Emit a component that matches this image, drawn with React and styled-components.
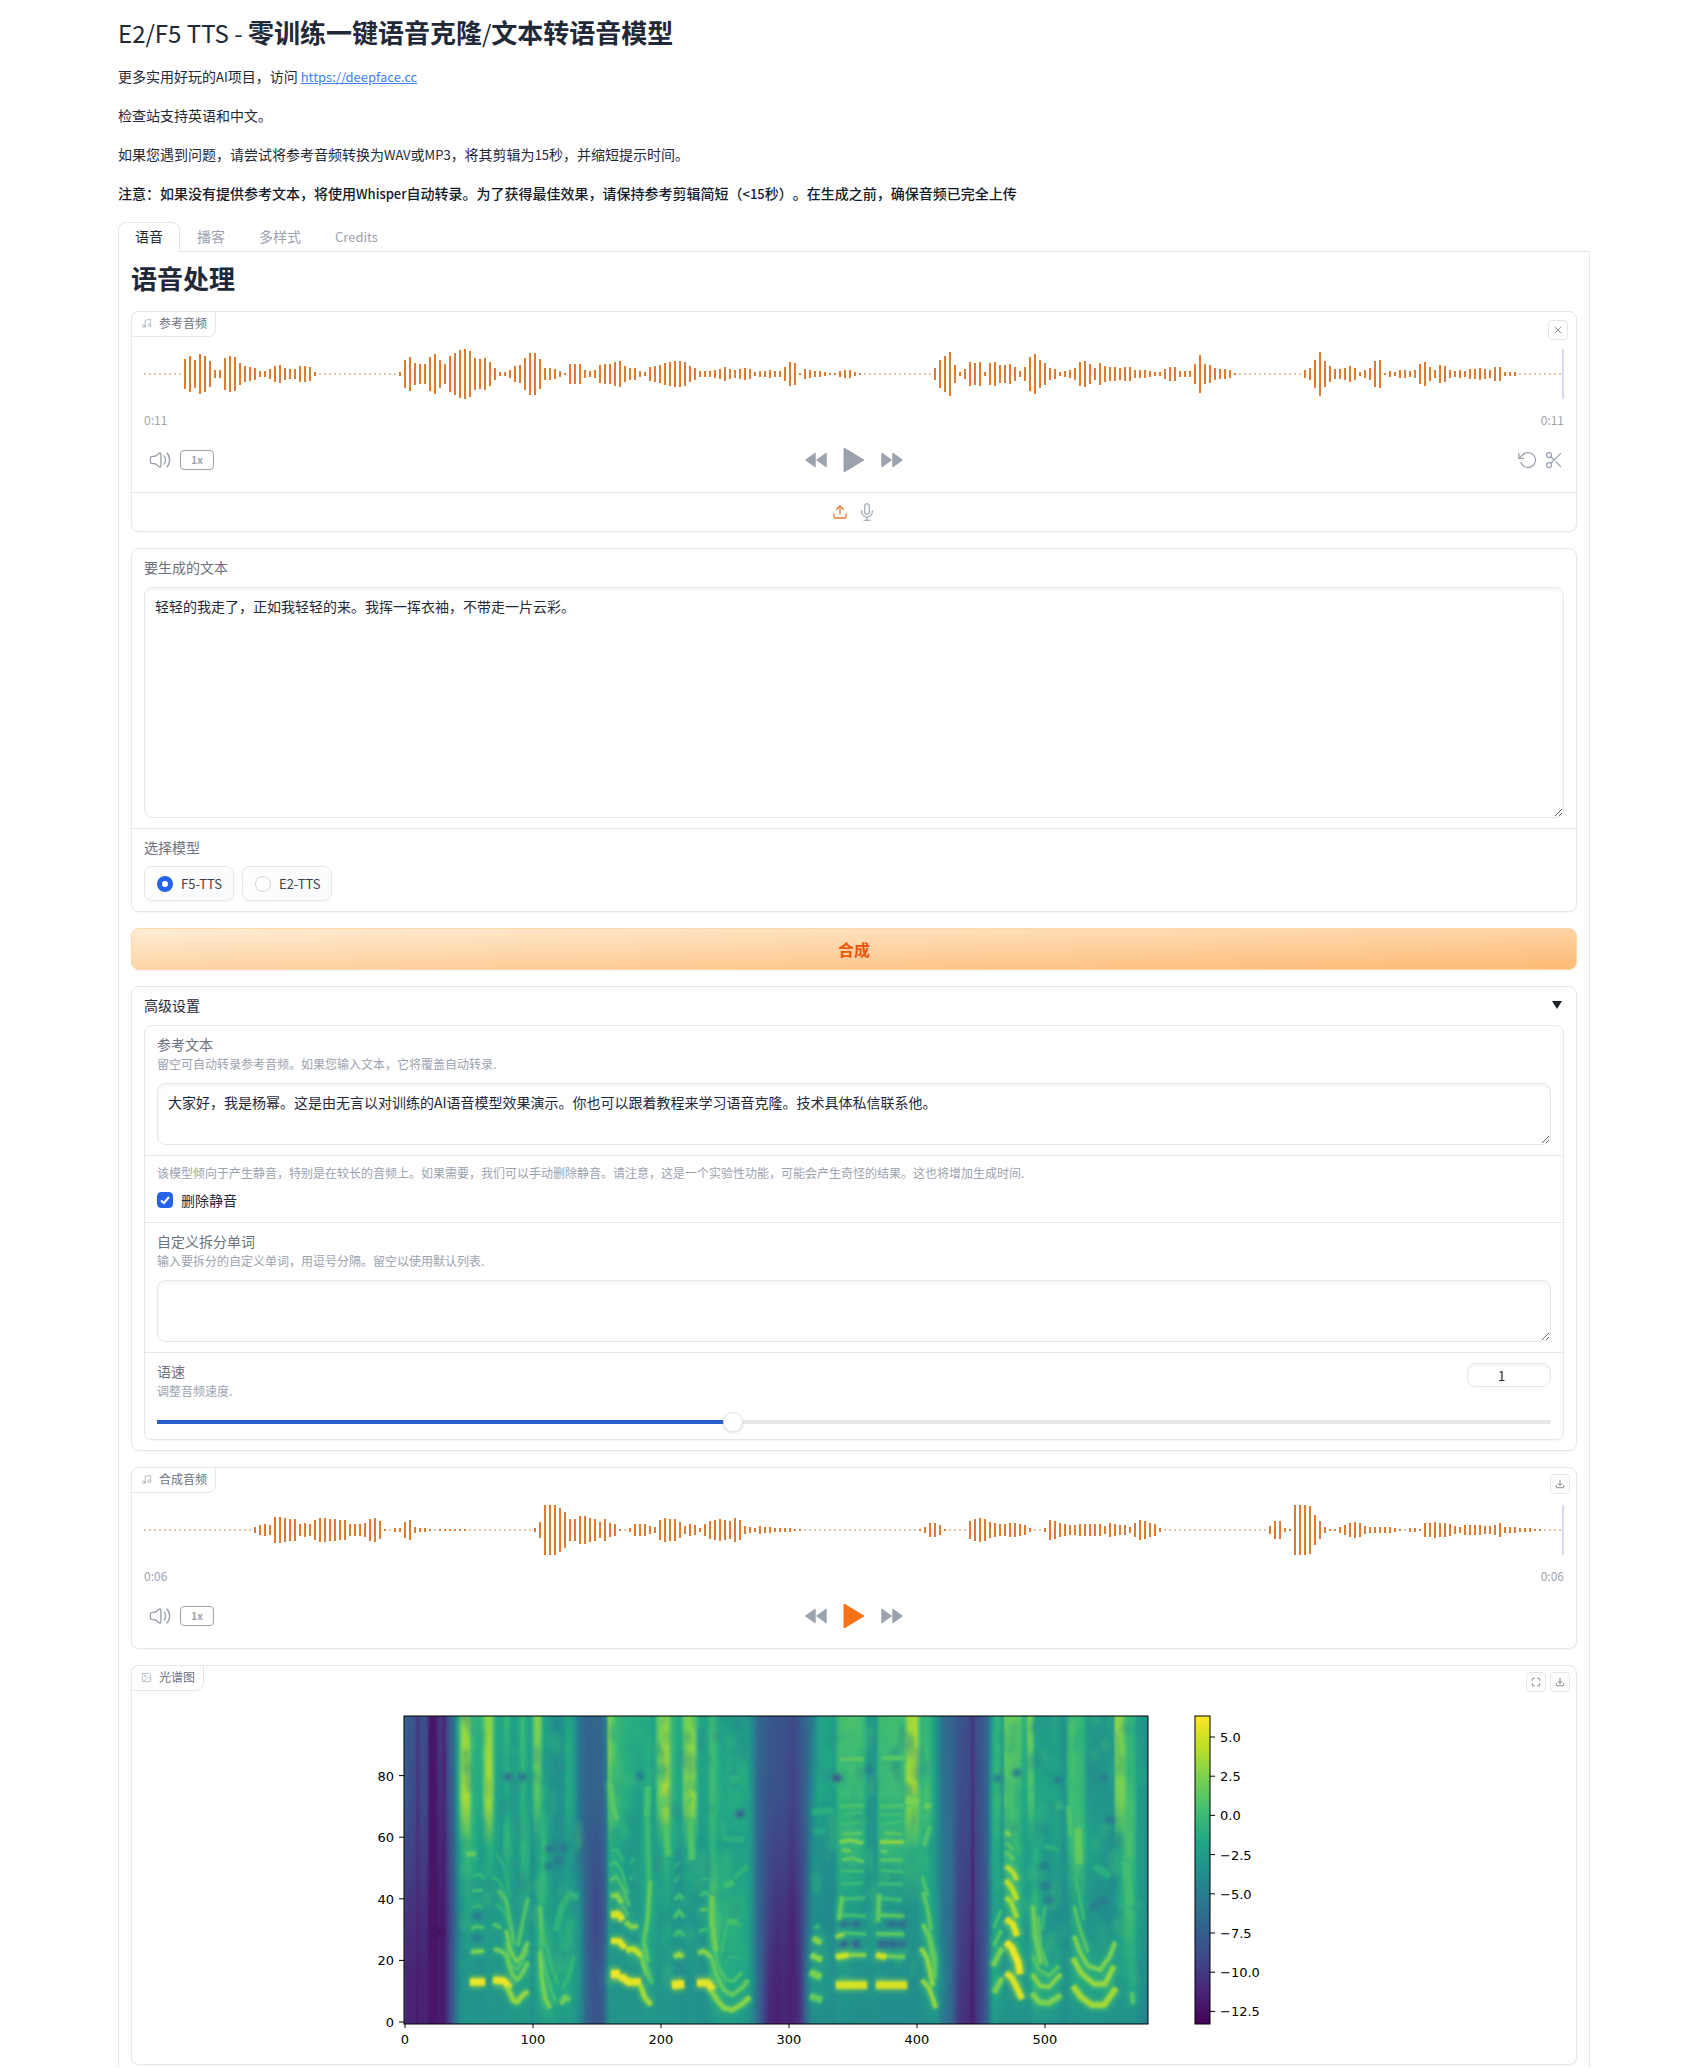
import React, { useState } from 'react'
import styled, { createGlobalStyle, css } from 'styled-components'
import {
	FiDownload,
	FiImage,
	FiMaximize,
	FiMic,
	FiMusic,
	FiRotateCcw,
	FiScissors,
	FiUpload,
	FiX,
} from 'react-icons/fi'

const GlobalStyle = createGlobalStyle`
	* {
		box-sizing: border-box;
	}
	body {
		margin: 0;
		background: #fff;
		color: #1f2937;
		font-family: 'Noto Sans CJK SC', 'Open Sans', sans-serif;
		font-size: 14px;
		line-height: 20px;
		text-spacing-trim: space-all;
	}
	h1, h2, p {
		margin: 0;
	}
	button, input, textarea {
		font-family: inherit;
		color: inherit;
	}
`

const Page = styled.main`
	max-width: 1536px;
	margin: 0 auto;
	padding: 16px 31px 0 33px;
`
const Title = styled.h1`
	font-size: 26px;
	line-height: 32px;
	font-weight: 700;
	margin-bottom: 18px;
`
const TitleLatin = styled.span`
	font-size: 24px;
	font-weight: 400;
`
const Latin = styled.span`
	font-size: 13px;
`
const Prose = styled.div`
	display: flex;
	flex-direction: column;
	gap: 20px;
	line-height: 19px;

	a {
		color: #3b82f6;
	}
`
const Note = styled.p`
	font-weight: 500;
	color: #111827;
`

const TabBar = styled.div`
	display: flex;
	height: 30px;
	margin-top: 19px;
	border-bottom: 1px solid #e5e7eb;
`
const Tab = styled.button`
	height: 30px;
	padding: 0 16px 3px;
	font-size: 14px;
	line-height: 26px;
	cursor: pointer;
	color: ${(props) => (props.$active ? '#1f2937' : '#9ca3af')};
	background: ${(props) => (props.$active ? '#fff' : 'transparent')};
	border: 1px solid ${(props) => (props.$active ? '#e5e7eb' : 'transparent')};
	border-bottom: none;
	border-radius: 8px 8px 0 0;
`
const Panel = styled.section`
	display: flex;
	flex-direction: column;
	gap: 16px;
	padding: 12px 12px 2px;
	border: 1px solid #e5e7eb;
	border-top: none;
	border-bottom: none;
`
const PanelTitle = styled.h2`
	font-size: 26px;
	line-height: 28px;
	font-weight: 700;
	margin-bottom: 3px;
`

const Block = styled.div`
	position: relative;
	border: 1px solid #e5e7eb;
	border-radius: 8px;
	background: #fff;
	box-shadow: 0 1px 2px rgba(0, 0, 0, 0.04);
`
const BlockLabel = styled.div`
	position: absolute;
	top: -1px;
	left: -1px;
	display: flex;
	align-items: center;
	gap: 7px;
	height: 26px;
	padding: 0 8px 2px 9px;
	font-size: 12px;
	color: #6b7280;
	border: 1px solid #e5e7eb;
	border-radius: 8px 0 8px 0;
	background: #fff;

	svg {
		width: 11px;
		height: 11px;
		stroke-width: 1.5;
		color: #9ca3af;
	}
`
const CornerTools = styled.div`
	position: absolute;
	top: ${(props) => (props.$tight ? '6px' : '8px')};
	right: ${(props) => (props.$tight ? '6px' : '8px')};
	display: flex;
	gap: 4px;
`
const CornerButton = styled.button`
	display: flex;
	align-items: center;
	justify-content: center;
	width: 20px;
	height: 20px;
	padding: 0;
	border: 1px solid #e5e7eb;
	border-radius: 4px;
	background: #fff;
	color: #6b7280;
	cursor: pointer;
`

const Player = styled.div`
	padding: 37px 12px 19px;
`
const WaveSvg = styled.svg`
	display: block;
	width: 100%;
	height: 50px;
`
const Times = styled.div`
	display: flex;
	justify-content: space-between;
	margin-top: 10px;
	font-size: 12px;
	line-height: 21px;
	color: #9ca3af;
`
const Controls = styled.div`
	display: grid;
	grid-template-columns: 1fr auto 1fr;
	align-items: center;
	height: 26px;
	margin-top: 17px;
	color: #9ca3af;
`
const ControlGroup = styled.div`
	display: flex;
	align-items: center;
	gap: ${(props) => props.$gap || 9}px;
	justify-content: ${(props) => props.$align || 'flex-start'};
	padding-left: ${(props) => (props.$align ? 0 : 5)}px;
`
const IconButton = styled.button`
	display: flex;
	padding: 0;
	border: none;
	background: none;
	cursor: pointer;
	color: ${(props) => props.$color || 'inherit'};
`
const SpeedButton = styled.button`
	width: 34px;
	height: 20px;
	padding: 0;
	border: 1px solid #9ca3af;
	border-radius: 4px;
	background: none;
	font-size: 10px;
	line-height: 18px;
	font-weight: 700;
	color: #9ca3af;
	cursor: pointer;
`
const Sources = styled.div`
	display: flex;
	align-items: center;
	justify-content: center;
	gap: 10px;
	height: 39px;
	border-top: 1px solid #e5e7eb;
	color: #9ca3af;
`

const Field = styled.div`
	padding: 8px 12px 10px;

	& + & {
		border-top: 1px solid #e5e7eb;
	}
`
const fieldTitle = css`
	display: block;
	padding: 0;
	font-size: 14px;
	line-height: 20px;
	color: #6b7280;
`
const FieldLabel = styled.label`
	${fieldTitle}
`
const FieldLegend = styled.legend`
	${fieldTitle}
`
const Info = styled.p`
	margin-top: ${(props) => (props.$first ? 0 : 1)}px;
	font-size: 12px;
	line-height: 18px;
	color: #9ca3af;
`
const TextArea = styled.textarea`
	display: block;
	width: 100%;
	height: ${(props) => (props.$tall ? 231 : 62)}px;
	margin-top: 10px;
	padding: 8px 10px;
	border: 1px solid #e5e7eb;
	border-radius: 8px;
	box-shadow: inset 0 2px 4px rgba(0, 0, 0, 0.05);
	background: #fff;
	font-size: 14px;
	line-height: 20px;
	resize: vertical;
`
const RadioSet = styled.fieldset`
	margin: 0;
	padding: 0;
	border: none;
`
const RadioRow = styled.div`
	display: flex;
	gap: 8px;
	margin-top: 9px;
`
const RadioCard = styled.label`
	display: flex;
	align-items: center;
	gap: 8px;
	height: 35px;
	padding: 0 11px 0 12px;
	border: 1px solid #e5e7eb;
	border-radius: 8px;
	background: linear-gradient(to bottom right, #fff, #f9fafb);
	box-shadow: 0 1px 2px rgba(0, 0, 0, 0.05);
	font-size: 13px;
	color: #374151;
	cursor: pointer;
`
const Radio = styled.input`
	appearance: none;
	width: 16px;
	height: 16px;
	margin: 0;
	border: 1px solid #d1d5db;
	border-radius: 50%;
	background: #fff;

	&:checked {
		border: 5px solid #2563eb;
	}
`
const SubmitButton = styled.button`
	height: 42px;
	border: 1px solid #fed7aa;
	border-radius: 8px;
	background: linear-gradient(to bottom right, #ffedd5, #fdba74);
	box-shadow: 0 1px 2px rgba(0, 0, 0, 0.05);
	font-size: 16px;
	font-weight: 600;
	color: #ea580c;
	cursor: pointer;
`

const Accordion = styled(Block)`
	padding: 8px 12px 10px;
`
const AccordionHeader = styled.button`
	display: flex;
	justify-content: space-between;
	align-items: center;
	width: 100%;
	margin-bottom: 10px;
	padding: 0;
	border: none;
	background: none;
	font-size: 14px;
	line-height: 20px;
	cursor: pointer;
`
const Arrow = styled.svg`
	width: 14px;
	height: 10px;
`
const CheckField = styled(Field)`
	padding-bottom: 12px;
`
const CheckRow = styled.label`
	display: flex;
	align-items: center;
	gap: 8px;
	margin-top: 8px;
	cursor: pointer;
`
const Checkbox = styled.input`
	appearance: none;
	width: 16px;
	height: 16px;
	margin: 0;
	border: 1px solid #d1d5db;
	border-radius: 4px;

	&:checked {
		border-color: #2563eb;
		background: #2563eb
			url("data:image/svg+xml,%3Csvg viewBox='0 0 16 16' fill='none' stroke='white' stroke-width='2' xmlns='http://www.w3.org/2000/svg'%3E%3Cpath d='M4 8.5l3 2.5 5-6'/%3E%3C/svg%3E")
			center / 16px;
	}
`
const SliderField = styled(Field)`
	padding-bottom: 5px;
`
const SliderHead = styled.div`
	display: flex;
	justify-content: space-between;
	align-items: flex-start;
`
const NumberInput = styled.input`
	width: 84px;
	height: 24px;
	margin-top: 2px;
	padding: 0 8px;
	border: 1px solid #e5e7eb;
	border-radius: 8px;
	box-shadow: inset 0 2px 4px rgba(0, 0, 0, 0.05);
	font-size: 13px;
	text-align: center;
`
const Range = styled.input`
	appearance: none;
	display: block;
	width: 100%;
	height: 24px;
	margin: 10px 0 0;
	background: linear-gradient(
			to right,
			#2c5fc9 var(--fill),
			#e5e7eb var(--fill)
		)
		center / 100% 4px no-repeat;

	&::-webkit-slider-thumb {
		appearance: none;
		width: 20px;
		height: 20px;
		border: 1px solid #e5e7eb;
		border-radius: 50%;
		background: #fff;
		box-shadow: 0 1px 3px rgba(0, 0, 0, 0.15);
	}
`
const Plot = styled.svg`
	display: block;
	width: 100%;
	max-width: 960px;
	margin: 0 auto;
	font-family: 'DejaVu Sans', sans-serif;
	font-size: 13px;
`
const PlotArea = styled.div`
	padding: 23px 12px 3px;
`

/* ---------- wave forms ---------- */

// bar heights in px, "h*n" repeats a height n times
const expand = (text) =>
	text
		.trim()
		.split(/\s+/)
		.flatMap((part) => {
			const [h, n] = part.split('*').map(Number)
			return Array(n || 1).fill(h)
		})

const REFERENCE_WAVE = expand(`
	1*8 30 36 28 40 36 26 8 8 32 36 34 22 16 14 12 6 6 10 16 18 12 10 10 16 16 14 4
	1*16 4 28 34 22 20 20 34 40 28 20 36 42 48 50 46 32 30 32 24 12 4 4 8 16 18 32
	42 42 30 12 12 10 6 2 20 20 20 8 6 8 18 20 20 24 26 16 12 12 6 4 14 16 18 22 24
	26 26 24 16 12 6 6 6 8 10 14 10 8 10 12 10 4 6 6 8 6 6 14 24 22 2 10 8 6 6 4 2 2
	6 8 8 4 2 1*14 12 28 36 44 18 4 10 24 22 24 4 22 24 18 18 20 14 6 14 34 40 28 22
	12 10 4 6 8 12 24 26 20 12 22 16 14 14 12 14 14 8 8 8 6 4 4 10 14 14 6 6 6 20 38
	20 18 12 10 10 8 2 1*13 8 12 28 44 26 16 10 10 12 16 12 4 8 12 26 28 2 6 4 8 8 6
	8 20 24 14 8 18 16 8 6 8 6 10 10 12 10 8 14 14 4 4 4 1*9
`)

const RESULT_WAVE = expand(`
	1*22 6 10 12 10 26 26 24 22 22 12 14 12 20 24 24 22 22 20 20 12 12 12 14 22 24 18
	2 1 4 4 16 20 6 4 4 2 1 2*6 1*13 4 16 50 50 50 44 36 22 22 28 28 24 22 16 22 14 12
	2 1 4 12 12 12 8 6 20 24 22 22 16 8 12 10 4 12 18 20 22 20 18 24 20 8 6 4 8 6 6 4
	4 4 4 2 2 1*23 2 6 14 14 10 2 1*4 18 22 24 22 16 14 12 12 14 14 12 10 4 1 1 4 20 18
	14 12 10 10 12*5 8 14 12 10 10 6 14 20 18 14 12 4 1*21 8 18 18 4 2 50 50 50 48 30
	18 6 2 2 6 10 14 16 14 8 6 6 6 6 6 4 2 1 4 4 2 14 14 16 14 14 12 8 6 10 10 10 10 8
	8 10 14 6 6 6 4 4 4 2 2 1*4
`)

const Wave = ({ bars }) => (
	<WaveSvg viewBox="0 0 1420 50" preserveAspectRatio="none">
		{bars.map((h, i) => (
			<rect
				key={i}
				x={i * 5}
				y={25 - h / 2}
				width="2"
				height={h}
				fill={h > 1 ? '#e07a2f' : '#c98a50'}
			/>
		))}
		<rect x="1418" y="0" width="2" height="50" fill="#dcd8f0" />
	</WaveSvg>
)

/* ---------- icons ---------- */

const VolumeIcon = () => (
	<svg width="22" height="22" viewBox="0 0 24 24" fill="none" stroke="currentColor" strokeWidth="1.5" strokeLinecap="round" strokeLinejoin="round">
		<path d="M1.5 13.9v-3.8a2 2 0 0 1 2-2h2.4a1 1 0 0 0 .6-.1l5-3.6a1 1 0 0 1 1.5.8v13.6a1 1 0 0 1-1.5.8l-5-3.6a1 1 0 0 0-.6-.1H3.5a2 2 0 0 1-2-2z" />
		<path d="M16.5 7.5s1.5 1.5 1.5 4.5-1.5 4.5-1.5 4.5" />
		<path d="M19.5 4.5s3 2.5 3 7.5-3 7.5-3 7.5" />
	</svg>
)
const RewindIcon = () => (
	<svg width="22" height="16" viewBox="0 0 22 16" fill="currentColor" stroke="currentColor" strokeWidth="1.5" strokeLinejoin="round">
		<path d="M10 1.5v13L1 8z" />
		<path d="M21 1.5v13L12 8z" />
	</svg>
)
const ForwardIcon = () => (
	<svg width="22" height="16" viewBox="0 0 22 16" fill="currentColor" stroke="currentColor" strokeWidth="1.5" strokeLinejoin="round">
		<path d="M1 1.5v13L10 8z" />
		<path d="M12 1.5v13L21 8z" />
	</svg>
)
const PlayIcon = () => (
	<svg width="22" height="26" viewBox="0 0 22 26" fill="currentColor" stroke="currentColor" strokeLinejoin="round">
		<path d="M1 1v24l20-12z" />
	</svg>
)

const AudioPlayer = ({ bars, time, playColor, children }) => (
	<Player>
		<Wave bars={bars} />
		<Times>
			<time>{time}</time>
			<time>{time}</time>
		</Times>
		<Controls>
			<ControlGroup>
				<IconButton aria-label="volume">
					<VolumeIcon />
				</IconButton>
				<SpeedButton>1x</SpeedButton>
			</ControlGroup>
			<ControlGroup $align="center" $gap={16}>
				<IconButton aria-label="rewind">
					<RewindIcon />
				</IconButton>
				<IconButton aria-label="play" $color={playColor}>
					<PlayIcon />
				</IconButton>
				<IconButton aria-label="forward">
					<ForwardIcon />
				</IconButton>
			</ControlGroup>
			<ControlGroup $align="flex-end" $gap={6}>
				{children}
			</ControlGroup>
		</Controls>
	</Player>
)

/* ---------- spectrogram ---------- */

const VIRIDIS = [
	[68, 1, 84],
	[72, 36, 117],
	[65, 68, 135],
	[53, 95, 141],
	[42, 120, 142],
	[33, 145, 140],
	[34, 168, 132],
	[68, 191, 112],
	[122, 209, 81],
	[189, 223, 38],
	[253, 231, 37],
]
const viridis = (v) => {
	const t = Math.min(0.999, Math.max(0, v)) * 10
	const i = Math.floor(t)
	const mix = VIRIDIS[i].map((c, k) =>
		Math.round(c + (VIRIDIS[i + 1][k] - c) * (t - i))
	)
	return `rgb(${mix.join(',')})`
}

const PLOT_W = 744
const PLOT_H = 308
const COL = 3
const LEVELS = [0, 0.27, 0.43, 0.65, 0.85, 1]

// x, then the level at each of LEVELS from the top down
const COLUMNS = [
	[0, 30, 28, 22, 15, 10, 10],
	[7, 27, 23, 20, 14, 10, 10],
	[9, 30, 26, 22, 16, 11, 10],
	[13, 15, 13, 13, 10, 8, 8],
	[17, 27, 24, 20, 14, 10, 10],
	[22, 22, 20, 18, 12, 10, 9],
	[25, 7, 6, 6, 5, 6, 6],
	[32, 7, 5, 5, 5, 5, 6],
	[35, 20, 16, 12, 8, 8, 8],
	[40, 10, 10, 8, 7, 7, 7],
	[44, 28, 25, 22, 18, 18, 18],
	[50, 38, 34, 32, 30, 33, 34],
	[54, 58, 58, 48, 42, 42, 42],
	[58, 78, 80, 58, 46, 46, 47],
	[63, 82, 86, 64, 52, 48, 48],
	[68, 62, 60, 60, 52, 48, 48],
	[77, 60, 55, 50, 48, 46, 47],
	[81, 76, 80, 54, 50, 48, 47],
	[86, 80, 86, 60, 52, 50, 48],
	[91, 58, 55, 54, 50, 48, 48],
	[97, 55, 50, 50, 50, 48, 48],
	[102, 64, 58, 66, 52, 50, 48],
	[108, 52, 48, 52, 50, 52, 48],
	[113, 54, 50, 48, 48, 52, 48],
	[118, 64, 62, 62, 48, 52, 48],
	[124, 54, 52, 58, 52, 52, 48],
	[128, 56, 54, 42, 44, 46, 46],
	[131, 80, 72, 48, 52, 52, 48],
	[135, 78, 68, 54, 62, 60, 48],
	[139, 54, 54, 64, 58, 66, 50],
	[145, 50, 48, 52, 52, 64, 52],
	[151, 44, 46, 44, 50, 58, 50],
	[158, 46, 46, 44, 54, 56, 48],
	[164, 58, 60, 50, 54, 58, 50],
	[170, 48, 50, 44, 50, 52, 48],
	[175, 38, 38, 38, 46, 46, 42],
	[182, 32, 32, 30, 30, 32, 32],
	[190, 33, 31, 26, 22, 25, 26],
	[198, 33, 32, 28, 24, 30, 27],
	[202, 42, 40, 38, 36, 40, 40],
	[205, 78, 72, 55, 50, 48, 46],
	[210, 66, 68, 60, 50, 48, 48],
	[217, 60, 60, 52, 50, 48, 47],
	[226, 58, 56, 48, 50, 48, 47],
	[235, 58, 50, 50, 50, 48, 47],
	[243, 58, 60, 62, 54, 52, 48],
	[250, 54, 52, 52, 54, 50, 48],
	[254, 74, 72, 52, 50, 48, 48],
	[262, 80, 87, 60, 52, 48, 48],
	[268, 62, 62, 56, 50, 48, 48],
	[276, 55, 52, 46, 46, 46, 46],
	[281, 76, 78, 54, 48, 46, 46],
	[290, 77, 82, 60, 48, 48, 48],
	[294, 54, 54, 50, 48, 46, 46],
	[302, 54, 54, 50, 50, 46, 46],
	[308, 67, 66, 62, 72, 56, 48],
	[314, 56, 58, 54, 64, 62, 50],
	[320, 50, 56, 54, 60, 58, 50],
	[330, 50, 58, 52, 60, 56, 50],
	[342, 50, 56, 52, 56, 54, 48],
	[347, 44, 48, 48, 46, 48, 44],
	[353, 34, 33, 34, 34, 36, 34],
	[364, 28, 26, 23, 20, 14, 11],
	[372, 26, 25, 20, 14, 10, 9],
	[380, 26, 24, 21, 15, 12, 11],
	[388, 22, 19, 16, 10, 9, 9],
	[396, 28, 26, 23, 18, 15, 14],
	[402, 33, 33, 30, 32, 38, 34],
	[408, 40, 44, 44, 44, 50, 44],
	[415, 54, 56, 46, 44, 50, 44],
	[424, 56, 54, 44, 42, 48, 44],
	[430, 54, 50, 44, 44, 46, 44],
	[434, 66, 62, 60, 54, 50, 45],
	[447, 68, 64, 62, 50, 48, 45],
	[459, 65, 62, 58, 46, 46, 44],
	[463, 50, 48, 48, 48, 48, 44],
	[471, 48, 46, 46, 52, 50, 44],
	[475, 64, 62, 60, 46, 46, 44],
	[489, 66, 64, 62, 46, 46, 44],
	[500, 66, 64, 60, 46, 46, 44],
	[503, 82, 82, 62, 46, 46, 44],
	[512, 83, 85, 62, 46, 44, 44],
	[516, 60, 62, 60, 50, 48, 44],
	[522, 62, 68, 60, 54, 52, 44],
	[528, 56, 58, 52, 52, 56, 46],
	[532, 46, 48, 46, 48, 52, 46],
	[538, 36, 38, 40, 40, 42, 40],
	[547, 32, 34, 35, 34, 34, 33],
	[554, 26, 24, 22, 20, 18, 16],
	[565, 23, 22, 20, 17, 14, 12],
	[568, 14, 12, 10, 9, 8, 7],
	[571, 24, 22, 20, 18, 15, 14],
	[578, 28, 27, 26, 24, 22, 22],
	[584, 34, 34, 33, 32, 34, 34],
	[588, 54, 58, 56, 50, 56, 48],
	[594, 64, 66, 56, 54, 56, 48],
	[598, 50, 48, 46, 50, 52, 46],
	[601, 72, 68, 62, 54, 50, 46],
	[608, 72, 66, 66, 56, 50, 46],
	[615, 72, 62, 60, 58, 54, 46],
	[621, 54, 52, 50, 50, 50, 46],
	[624, 78, 66, 52, 50, 50, 46],
	[627, 76, 70, 54, 58, 56, 46],
	[631, 52, 56, 60, 62, 62, 48],
	[642, 50, 54, 48, 46, 56, 48],
	[654, 50, 54, 54, 46, 54, 46],
	[660, 44, 44, 42, 42, 46, 44],
	[665, 68, 66, 62, 46, 50, 46],
	[672, 64, 64, 68, 54, 56, 46],
	[679, 60, 60, 64, 50, 56, 46],
	[683, 50, 48, 54, 46, 56, 46],
	[702, 48, 48, 48, 44, 56, 46],
	[709, 52, 50, 46, 46, 54, 46],
	[712, 80, 74, 52, 48, 50, 46],
	[719, 76, 76, 62, 60, 50, 46],
	[723, 60, 64, 68, 66, 54, 46],
	[729, 58, 66, 64, 62, 56, 46],
	[733, 50, 52, 50, 52, 50, 44],
	[738, 50, 48, 50, 48, 46, 42],
	[744, 45, 45, 44, 46, 44, 40],
]

// voiced parts are lifted a little over the silent ones
const lift = (v) => (v > 41 ? v + 4 : v)

const columnAt = (x) => {
	let i = 0
	while (i < COLUMNS.length - 2 && COLUMNS[i + 1][0] <= x) i++
	const a = COLUMNS[i]
	const b = COLUMNS[i + 1]
	const t = Math.min(1, Math.max(0, (x - a[0]) / (b[0] - a[0])))
	return LEVELS.map((_, k) => {
		const v = lift(a[k + 1]) + (lift(b[k + 1]) - lift(a[k + 1])) * t
		return v / 100
	})
}

// harmonics: level, stroke width, points
const TRACES = [
	[97, 9, '66,266 81,266'], [97, 8, '89,264 100,265 106,272'],
	[84, 6, '103,270 109,284 113,286 118,280 124,275'],
	[80, 5, '67,236 80,235'], [78, 5, '90,233 99,236 105,243'],
	[78, 5, '103,243 108,258 113,264 118,258 124,246'],
	[72, 4, '67,213 73,210 80,212'], [74, 4, '89,208 97,212'],
	[80, 4, '102,214 107,236 113,246 118,240 124,226'],
	[74, 3, '102,226 107,248 113,254 118,246 124,234'],
	[68, 3, '68,192 74,189 79,192'], [70, 4, '68,175 79,174'],
	[68, 3, '69,161 75,158 80,162'], [64, 3, '69,146 74,142'],
	[74, 4, '94,174 102,184 106,205 110,228'],
	[66, 3, '92,188 100,196 105,210'], [64, 3, '92,138 100,150 106,180'],
	[74, 4, '124,182 119,204 114,230'], [66, 3, '88,160 96,166 103,182'],
	[76, 6, '62,138 72,138'], [74, 5, '136,190 138,220 137,240'],
	[80, 5, '136,236 138,262 141,282 146,292'],
	[70, 4, '136,222 141,250 146,272 152,286'],
	[68, 4, '139,214 146,246 154,268'],
	[78, 6, '157,288 161,281 166,284'], [66, 5, '158,274 164,262 170,240'],
	[64, 9, '152,215 158,190 166,178 174,182'],
	[98, 10, '207,258 216,258'], [96, 9, '216,260 225,266 237,266'],
	[86, 6, '236,268 241,282 247,289'],
	[96, 7, '207,225 215,225 221,232'], [90, 7, '222,234 230,233 238,240'],
	[80, 5, '237,240 242,256 247,264'],
	[94, 8, '207,199 214,198 219,204'], [82, 5, '221,206 228,211 234,210'],
	[82, 6, '207,180 213,179 218,187'], [72, 3, '218,187 224,200'],
	[74, 3, '206,165 212,160 219,172 225,190'],
	[70, 3, '206,150 211,145 218,156 224,178'],
	[68, 3, '207,134 213,134 219,146'], [66, 3, '225,164 229,160'],
	[66, 3, '226,148 230,142'], [74, 6, '206,66 209,90 213,104'],
	[70, 8, '244,70 243,100'], [76, 5, '246,165 244,200 240,226 244,246'],
	[68, 6, '243,100 245,165'],
	[72, 4, '240,215 239,236 245,258 248,268'],
	[97, 10, '268,269 280,268'], [84, 6, '270,241 275,238 279,241'],
	[70, 4, '270,220 275,215 280,220'], [72, 4, '270,202 275,195 280,201'],
	[70, 4, '271,184 275,179 279,183'], [66, 3, '270,166 276,160'],
	[64, 3, '270,152 276,146'],
	[96, 9, '293,267 304,267 309,274'], [82, 5, '294,237 300,235 307,241'],
	[70, 4, '295,215 304,213'], [74, 4, '296,194 304,193'],
	[70, 4, '296,180 301,176 306,180'], [66, 3, '297,164 305,162'],
	[82, 6, '307,274 313,284 320,292 328,294 338,288 346,281'],
	[76, 5, '307,240 312,258 320,274 328,279 338,272 344,264'],
	[72, 4, '308,220 314,250 322,264 330,265 338,256'],
	[78, 6, '308,180 308,205 312,235'], [68, 4, '318,236 322,212 328,204 338,210'],
	[66, 3, '320,250 326,240 336,242'], [70, 8, '322,206 334,206'],
	[69, 9, '320,170 330,166'], [64, 7, '330,162 344,150'],
	[62, 9, '318,122 340,124'], [63, 10, '326,64 336,62'],
	[76, 9, '257,84 263,87'], [76, 8, '283,84 287,86'], [72, 8, '262,110 264,140'],
	[72, 8, '286,104 288,144'],
	[76, 8, '406,280 418,284'], [80, 8, '406,256 417,261'],
	[82, 7, '407,239 418,244'], [82, 7, '409,222 417,227'],
	[68, 4, '410,212 416,210'], [62, 9, '408,96 430,94'], [60, 8, '410,116 422,114'],
	[94, 9, '432,269 463,269'], [94, 9, '472,269 503,269'],
	[92, 7, '432,241 444,239'], [82, 5, '444,239 462,239'],
	[92, 7, '472,239 482,241'], [78, 5, '482,240 501,241'],
	[84, 5, '432,221 440,218'], [72, 4, '440,217 462,218'],
	[74, 5, '472,218 500,218'], [82, 4, '434,200 438,198'],
	[70, 4, '437,199 462,200'], [76, 4, '473,199 500,200'],
	[70, 4, '436,183 461,182'], [70, 4, '474,182 498,184'],
	[70, 3, '437,168 458,167'], [70, 3, '475,168 499,168'],
	[70, 3, '437,155 460,155'], [70, 3, '476,154 499,156'],
	[76, 4, '438,144 448,142 460,146'], [76, 3, '476,144 499,144'],
	[80, 3, '438,134 447,135'], [78, 3, '477,135 484,136'],
	[82, 4, '436,126 446,124 459,127'], [84, 4, '476,126 500,126'],
	[76, 3, '438,118 458,117'], [76, 3, '480,117 498,118'],
	[70, 3, '438,108 456,106'], [70, 3, '478,108 496,106'],
	[70, 3, '440,98 458,96'], [70, 3, '476,98 498,99'],
	[70, 7, '436,90 460,90'], [70, 7, '476,90 500,90'],
	[74, 6, '436,43 460,43'], [74, 6, '478,42 502,42'],
	[76, 5, '438,180 435,204'], [76, 5, '475,178 474,206'],
	[80, 10, '502,84 514,86'], [76, 8, '521,88 526,92'],
	[72, 6, '526,110 520,130'], [84, 5, '518,264 525,272 532,292'],
	[84, 5, '517,232 523,242 529,270'], [78, 5, '519,208 525,222 531,250'],
	[76, 4, '519,176 523,190 527,214'], [72, 4, '518,160 524,180'],
	[76, 6, '524,215 530,240 530,262'],
	[80, 6, '590,277 598,262'], [80, 6, '589,250 598,232'],
	[74, 4, '590,230 597,214'], [70, 4, '590,212 597,194'],
	[94, 7, '602,257 608,262 613,272 618,283'],
	[97, 8, '602,226 608,232 614,246 616,258'],
	[95, 7, '602,203 609,208 613,220'],
	[86, 6, '602,181 607,186 613,202'], [90, 6, '602,164 608,172 613,184'],
	[90, 5, '602,150 609,156 613,164'], [76, 4, '602,136 610,144'],
	[80, 5, '602,115 606,120'], [74, 4, '602,126 609,134'],
	[80, 7, '628,277 635,286 645,287 657,279'],
	[82, 5, '628,258 636,270 645,271 657,258'],
	[74, 4, '629,240 635,254 645,260 655,250'],
	[78, 5, '629,190 631,220 637,248'], [74, 4, '634,200 636,230 643,250'],
	[70, 3, '641,190 638,214'],
	[86, 7, '669,270 677,281 688,289 700,289 712,272'],
	[84, 6, '669,242 677,257 690,268 701,268 710,250'],
	[80, 5, '670,220 676,236 684,250 696,254 706,240 711,226'],
	[74, 4, '670,190 675,210 684,236'], [70, 3, '671,160 676,184 680,204'],
	[76, 9, '674,112 675,148'], [62, 10, '690,150 706,160'],
	[62, 7, '640,130 655,134'], [74, 5, '728,276 729,288'],
	[69, 11, '722,145 726,190'], [72, 6, '665,90 667,120'],
]

const SPOTS = [
	[104, 61, 36], [118, 61, 40], [146, 133, 38], [236, 60, 42], [336, 98, 32],
	[160, 132, 40], [433, 62, 26], [35, 216, 4], [594, 62, 42],
	[613, 57, 42], [654, 64, 42], [700, 62, 42], [640, 150, 42], [655, 90, 64],
	[73, 200, 40], [452, 228, 32], [488, 228, 32], [452, 208, 36], [488, 208, 36],
	[700, 185, 40], [642, 170, 40], [466, 54, 42], [706, 104, 40], [73, 222, 42],
	[440, 228, 32], [478, 228, 34], [440, 208, 36], [498, 208, 36], [498, 228, 34],
	[645, 184, 40], [690, 190, 40], [155, 145, 40], [145, 150, 42],
]

// uneven patches inside the voiced ranges
const VOICED = [[58, 176], [206, 344], [412, 530], [590, 738]]
const PATCHES = []
let seed = 7
const random = () => {
	seed = (seed * 16807) % 2147483647
	return seed / 2147483647
}
VOICED.forEach(([from, to]) => {
	for (let n = 0; n < (to - from) * 1.2; n++) {
		PATCHES.push({
			x: from + random() * (to - from),
			y: random() * 270,
			rx: 2 + random() * 4,
			ry: 3 + random() * 12,
			v: 0.42 + random() * 0.28,
		})
	}
})

const xTicks = [0, 100, 200, 300, 400, 500]
const yTicks = [0, 20, 40, 60, 80]
const barTicks = ['5.0', '2.5', '0.0', '−2.5', '−5.0', '−7.5', '−10.0', '−12.5']

const Spectrogram = () => {
	const columns = []
	for (let x = 0; x < PLOT_W; x += COL) columns.push(x)
	return (
		<Plot viewBox="0 0 960 372" role="img" aria-label="光谱图">
			<defs>
				{columns.map((x) => (
					<linearGradient key={x} id={`col${x}`} x1="0" y1="0" x2="0" y2="1">
						{columnAt(x + 1).map((v, k) => (
							<stop key={k} offset={LEVELS[k]} stopColor={viridis(v)} />
						))}
					</linearGradient>
				))}
				<linearGradient id="scale" x1="0" y1="1" x2="0" y2="0">
					{VIRIDIS.map((c, k) => (
						<stop key={k} offset={k / 10} stopColor={`rgb(${c.join(',')})`} />
					))}
				</linearGradient>
				<filter id="soft" x="-5%" y="-5%" width="110%" height="110%">
					<feGaussianBlur stdDeviation="1.2" />
				</filter>
				<filter id="spot" x="-5%" y="-5%" width="110%" height="110%">
					<feGaussianBlur stdDeviation="2.2" />
				</filter>
				<clipPath id="frame">
					<rect width={PLOT_W} height={PLOT_H} />
				</clipPath>
			</defs>
			<g transform="translate(30 27)">
				<g clipPath="url(#frame)">
					<g filter="url(#soft)">
						<rect x="-6" y="-6" width="756" height="320" fill={viridis(0.4)} />
						{columns.map((x) => (
							<rect key={x} x={x} y="-2" width={COL + 1} height={PLOT_H + 4} fill={`url(#col${x})`} />
						))}
					</g>
					<g filter="url(#spot)">
						{PATCHES.map((p, i) => (
							<ellipse key={i} cx={p.x} cy={p.y} rx={p.rx} ry={p.ry} fill={viridis(p.v)} fillOpacity="0.32" />
						))}
						{SPOTS.map(([x, y, v]) => (
							<ellipse key={`${x}-${y}`} cx={x} cy={y} rx="5" ry="4" fill={viridis(v / 100)} />
						))}
						{TRACES.map(([v, w, points]) => (
							<polyline key={points} points={points} fill="none" stroke={viridis(v / 100 - 0.1)} strokeWidth={w + 3} strokeOpacity="0.6" />
						))}
					</g>
					<g filter="url(#soft)">
						{TRACES.map(([v, w, points]) => (
							<polyline key={points} points={points} fill="none" stroke={viridis(v / 100)} strokeWidth={w * 0.8} strokeLinejoin="round" />
						))}
					</g>
				</g>
				<rect x="0" y="0" width={PLOT_W} height={PLOT_H} fill="none" stroke="#000" />
				{xTicks.map((n) => (
					<g key={n}>
						<path d={`M${1 + n * 1.28} 308v4`} stroke="#000" />
						<text x={1 + n * 1.28} y="328" textAnchor="middle">
							{n}
						</text>
					</g>
				))}
				{yTicks.map((n) => (
					<g key={n}>
						<path d={`M0 ${306 - n * 3.08}h-5`} stroke="#000" />
						<text x="-10" y={311 - n * 3.08} textAnchor="end">
							{n}
						</text>
					</g>
				))}
				<rect x="791" y="0" width="15" height={PLOT_H} fill="url(#scale)" stroke="#000" />
				{barTicks.map((label, k) => (
					<g key={label}>
						<path d={`M806 ${21 + k * 39.2}h5`} stroke="#000" />
						<text x="816" y={26 + k * 39.2}>
							{label}
						</text>
					</g>
				))}
			</g>
		</Plot>
	)
}

/* ---------- page ---------- */

const TABS = ['语音', '播客', '多样式', 'Credits']
const MODELS = ['F5-TTS', 'E2-TTS']
const MIN_SPEED = 0.3
const MAX_SPEED = 2

const App = () => {
	const [tab, setTab] = useState(TABS[0])
	const [model, setModel] = useState(MODELS[0])
	const [open, setOpen] = useState(true)
	const [speed, setSpeed] = useState(1)
	const fill = ((speed - MIN_SPEED) / (MAX_SPEED - MIN_SPEED)) * 100

	return (
		<>
			<GlobalStyle />
			<Page>
				<Title>
					<TitleLatin>E2/F5 TTS - </TitleLatin>零训练一键语音克隆
					<TitleLatin>/</TitleLatin>文本转语音模型
				</Title>
				<Prose>
					<p>
						更多实用好玩的<Latin>AI</Latin>项目，访问
						<Latin> </Latin>
						<a href="https://deepface.cc">
							<Latin>https://deepface.cc</Latin>
						</a>
					</p>
					<p>检查站支持英语和中文。</p>
					<p>
						如果您遇到问题，请尝试将参考音频转换为<Latin>WAV</Latin>或
						<Latin>MP3</Latin>，将其剪辑为<Latin>15</Latin>
						秒，并缩短提示时间。
					</p>
					<Note>
						注意：如果没有提供参考文本，将使用<Latin>Whisper</Latin>
						自动转录。为了获得最佳效果，请保持参考剪辑简短（
						<Latin>&lt;15</Latin>
						秒）。在生成之前，确保音频已完全上传
					</Note>
				</Prose>

				<TabBar role="tablist">
					{TABS.map((name) => (
						<Tab
							key={name}
							role="tab"
							aria-selected={tab === name}
							$active={tab === name}
							onClick={() => setTab(name)}
						>
							{name === 'Credits' ? <Latin>{name}</Latin> : name}
						</Tab>
					))}
				</TabBar>

				<Panel>
					<PanelTitle>语音处理</PanelTitle>

					<Block>
						<BlockLabel>
							<FiMusic />
							参考音频
						</BlockLabel>
						<CornerTools>
							<CornerButton aria-label="clear">
								<FiX size={12} strokeWidth={1.5} />
							</CornerButton>
						</CornerTools>
						<AudioPlayer bars={REFERENCE_WAVE} time="0:11">
							<IconButton aria-label="undo">
								<FiRotateCcw size={20} strokeWidth={1.5} />
							</IconButton>
							<IconButton aria-label="trim">
								<FiScissors size={20} strokeWidth={1.5} />
							</IconButton>
						</AudioPlayer>
						<Sources>
							<IconButton aria-label="upload" $color="#ea7a2f">
								<FiUpload size={16} />
							</IconButton>
							<IconButton aria-label="microphone">
								<FiMic size={18} strokeWidth={1.5} />
							</IconButton>
						</Sources>
					</Block>

					<Block>
						<Field>
							<FieldLabel htmlFor="gen-text">要生成的文本</FieldLabel>
							<TextArea
								id="gen-text"
								$tall
								defaultValue="轻轻的我走了，正如我轻轻的来。我挥一挥衣袖，不带走一片云彩。"
							/>
						</Field>
						<Field>
							<RadioSet>
								<FieldLegend>选择模型</FieldLegend>
								<RadioRow>
									{MODELS.map((name) => (
										<RadioCard key={name}>
											<Radio
												type="radio"
												name="model"
												checked={model === name}
												onChange={() => setModel(name)}
											/>
											{name}
										</RadioCard>
									))}
								</RadioRow>
							</RadioSet>
						</Field>
					</Block>

					<SubmitButton>合成</SubmitButton>

					<Accordion>
						<AccordionHeader onClick={() => setOpen(!open)}>
							高级设置
							<Arrow viewBox="0 0 14 10">
								<path d="M2 1h10l-5 8z" fill="#1f2328" />
							</Arrow>
						</AccordionHeader>
						{open && (
							<Block>
								<Field>
									<FieldLabel htmlFor="ref-text">参考文本</FieldLabel>
									<Info>
										留空可自动转录参考音频。如果您输入文本，它将覆盖自动转录.
									</Info>
									<TextArea
										id="ref-text"
										defaultValue="大家好，我是杨幂。这是由无言以对训练的AI语音模型效果演示。你也可以跟着教程来学习语音克隆。技术具体私信联系他。"
									/>
								</Field>
								<CheckField>
									<Info $first>
										该模型倾向于产生静音，特别是在较长的音频上。如果需要，我们可以手动删除静音。请注意，这是一个实验性功能，可能会产生奇怪的结果。这也将增加生成时间.
									</Info>
									<CheckRow>
										<Checkbox type="checkbox" defaultChecked />
										删除静音
									</CheckRow>
								</CheckField>
								<Field>
									<FieldLabel htmlFor="split-words">
										自定义拆分单词
									</FieldLabel>
									<Info>
										输入要拆分的自定义单词，用逗号分隔。留空以使用默认列表.
									</Info>
									<TextArea id="split-words" />
								</Field>
								<SliderField>
									<SliderHead>
										<div>
											<FieldLabel htmlFor="speed">语速</FieldLabel>
											<Info>调整音频速度.</Info>
										</div>
										<NumberInput
											type="number"
											aria-label="语速"
											value={speed}
											onChange={(e) => setSpeed(e.target.value)}
										/>
									</SliderHead>
									<Range
										id="speed"
										type="range"
										min={MIN_SPEED}
										max={MAX_SPEED}
										step="0.1"
										value={speed}
										onChange={(e) => setSpeed(e.target.value)}
										style={{ '--fill': `${fill}%` }}
									/>
								</SliderField>
							</Block>
						)}
					</Accordion>

					<Block>
						<BlockLabel>
							<FiMusic />
							合成音频
						</BlockLabel>
						<CornerTools $tight>
							<CornerButton aria-label="download">
								<FiDownload size={10} />
							</CornerButton>
						</CornerTools>
						<AudioPlayer bars={RESULT_WAVE} time="0:06" playColor="#f97316" />
					</Block>

					<Block>
						<BlockLabel>
							<FiImage />
							光谱图
						</BlockLabel>
						<CornerTools $tight>
							<CornerButton aria-label="fullscreen">
								<FiMaximize size={10} />
							</CornerButton>
							<CornerButton aria-label="download">
								<FiDownload size={10} />
							</CornerButton>
						</CornerTools>
						<PlotArea>
							<Spectrogram />
						</PlotArea>
					</Block>
				</Panel>
			</Page>
		</>
	)
}

export default App
